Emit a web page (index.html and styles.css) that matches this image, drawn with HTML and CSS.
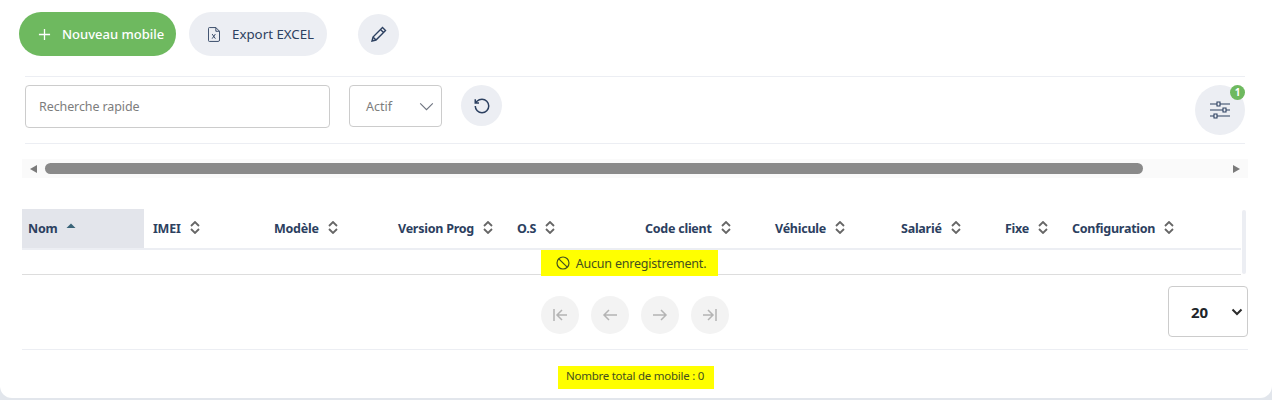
FILE: index.html
```html
<!DOCTYPE html>
<html lang="fr">
<head>
  <meta charset="UTF-8">
  <title>Mobiles</title>
  <link rel="stylesheet" href="styles.css">
</head>
<body>

<div class="card">

  <div class="actions">
    <button type="button" class="btn btn-green">
      <svg class="ico-plus" viewBox="0 0 14 14"><path d="M7 1v12M1 7h12"/></svg>
      Nouveau mobile
    </button>
    <button type="button" class="btn btn-grey">
      <svg class="ico-file" viewBox="0 0 13 16"><path d="M1.500 .5h7l4 4V14a1.500 1.500 0 0 1-1.500 1.500H1.500A1 1 0 0 1 .5 14.500v-13a1 1 0 0 1 1-1zM8.500 .5v4h4M4.500 7.500l3.500 5M8 7.500l-3.500 5"/></svg>
      Export EXCEL
    </button>
    <button type="button" class="round edit">
      <svg class="ico" viewBox="0 0 16 16"><path d="M11.500 1.500l3 3L5 14l-4 1 1-4zM9.500 3.500l3 3M2 11l3 3"/></svg>
    </button>
  </div>

  <div class="filters">
    <input class="search" type="text" placeholder="Recherche rapide">
    <div class="status">
      <span>Actif</span>
      <svg class="ico-chev" viewBox="0 0 16 10"><path d="M1 1.500l7 7 7-7"/></svg>
    </div>
    <button type="button" class="round">
      <svg class="ico-reset" viewBox="0 0 24 24"><path d="M3 12a9 9 0 1 0 9-9 9.750 9.750 0 0 0-6.740 2.740L3 8M3 3v5h5"/></svg>
    </button>
    <div class="filter-wrap">
      <button type="button" class="round big">
        <svg class="ico-sliders" viewBox="0 0 22 18"><path d="M1 3h7M11 3h10M1 9h13M17 9h4M1 15h4M8 15h13M8 1h3v4H8zM14 7h3v4h-3zM5 13h3v4H5z"/></svg>
      </button>
      <span class="badge">1</span>
    </div>
  </div>

  <div class="hscroll">
    <span class="arrow-left"></span>
    <span class="thumb"></span>
    <span class="arrow-right"></span>
  </div>

  <div class="table-wrap">
    <table class="grid">
      <thead>
        <tr>
          <th class="sorted">Nom <svg class="sort" viewBox="0 0 10 13"><path class="up" d="M5 2.500L9.500 7H.5z"/></svg></th>
          <th>IMEI <svg class="sort" viewBox="0 0 10 13"><path d="M1 5l4-4 4 4M1 8l4 4 4-4"/></svg></th>
          <th>Modèle <svg class="sort" viewBox="0 0 10 13"><path d="M1 5l4-4 4 4M1 8l4 4 4-4"/></svg></th>
          <th>Version Prog <svg class="sort" viewBox="0 0 10 13"><path d="M1 5l4-4 4 4M1 8l4 4 4-4"/></svg></th>
          <th>O.S <svg class="sort" viewBox="0 0 10 13"><path d="M1 5l4-4 4 4M1 8l4 4 4-4"/></svg></th>
          <th>Code client <svg class="sort" viewBox="0 0 10 13"><path d="M1 5l4-4 4 4M1 8l4 4 4-4"/></svg></th>
          <th>Véhicule <svg class="sort" viewBox="0 0 10 13"><path d="M1 5l4-4 4 4M1 8l4 4 4-4"/></svg></th>
          <th>Salarié <svg class="sort" viewBox="0 0 10 13"><path d="M1 5l4-4 4 4M1 8l4 4 4-4"/></svg></th>
          <th>Fixe <svg class="sort" viewBox="0 0 10 13"><path d="M1 5l4-4 4 4M1 8l4 4 4-4"/></svg></th>
          <th>Configuration <svg class="sort" viewBox="0 0 10 13"><path d="M1 5l4-4 4 4M1 8l4 4 4-4"/></svg></th>
        </tr>
      </thead>
      <tbody>
        <tr>
          <td colspan="10">
            <span class="empty">
              <svg class="ico-ban" viewBox="0 0 14 14"><circle cx="7" cy="7" r="6"/><path d="M2.800 2.800l8.400 8.400"/></svg>
              Aucun enregistrement.
            </span>
          </td>
        </tr>
      </tbody>
    </table>
    <span class="vscroll"></span>
  </div>

  <div class="pager">
    <div class="pages">
      <button type="button" class="page"><svg viewBox="0 0 16 16"><path d="M2 2v12M15 8H5M10 3L5 8l5 5"/></svg></button>
      <button type="button" class="page"><svg viewBox="0 0 16 16"><path d="M15 8H2M7 3L2 8l5 5"/></svg></button>
      <button type="button" class="page"><svg viewBox="0 0 16 16"><path d="M1 8h13M9 3l5 5-5 5"/></svg></button>
      <button type="button" class="page"><svg viewBox="0 0 16 16"><path d="M14 2v12M1 8h10M6 3l5 5-5 5"/></svg></button>
    </div>
    <div class="per-page">
      <span>20</span>
      <svg viewBox="0 0 12 8"><path d="M1.500 1.500L6 6l4.500-4.500"/></svg>
    </div>
  </div>

  <div class="total-row">
    <span class="total">Nombre total de mobile : 0</span>
  </div>

</div>

</body>
</html>
```

FILE: styles.css
```css
body {
  margin: 0;
  padding: 0;
  background-color: #e2e6ec;
  font-family: "Noto Sans", Arial, sans-serif;
  color: #2c4060;
}

button {
  font-family: inherit;
  border: none;
  padding: 0;
  cursor: pointer;
}

.card {
  height: 398px;
  box-sizing: border-box;
  padding: 12px 24px 0 22px;
  background-color: #fff;
  border-radius: 0 0 12px 12px;
  overflow: hidden;
}

/* Top buttons */
.actions {
  display: flex;
  align-items: center;
  margin-left: -3px;
  height: 44px;
}

.btn {
  display: flex;
  align-items: center;
  height: 44px;
  border-radius: 22px;
  font-size: 13px;
}

.btn-green {
  width: 157px;
  padding-left: 19px;
  gap: 11px;
  background-color: #6eb95f;
  color: #fff;
  font-weight: 500;
}

.btn-grey {
  width: 138px;
  margin-left: 13px;
  padding-left: 19px;
  gap: 12px;
  background-color: #eceef3;
  color: #2c4060;
  font-size: 13.300px;
}

.ico-plus {
  width: 13px;
  height: 13px;
  fill: none;
  stroke: #fff;
  stroke-width: 1.400;
}

.ico-file {
  width: 12px;
  height: 15px;
  fill: none;
  stroke: #2c4060;
  stroke-width: 1;
}

.round {
  width: 41px;
  height: 41px;
  display: flex;
  align-items: center;
  justify-content: center;
  border-radius: 50%;
  background-color: #eceef3;
  flex-shrink: 0;
}

.edit {
  margin-left: 31px;
}

.ico {
  width: 16px;
  height: 16px;
  fill: none;
  stroke: #2c4060;
  stroke-width: 1.400;
}

.ico-reset {
  width: 18px;
  height: 18px;
  fill: none;
  stroke: #2c4060;
  stroke-width: 2;
}

/* Filter bar */
.filters {
  display: flex;
  align-items: flex-start;
  margin: 20px 3px 0 3px;
  padding: 8px 0;
  height: 50px;
  border-top: 1px solid #eceef3;
  border-bottom: 1px solid #eceef3;
}

.search {
  width: 305px;
  height: 43px;
  box-sizing: border-box;
  padding: 0 13px;
  border: 1px solid #ccc;
  border-radius: 4px;
  font-family: inherit;
  font-size: 12.500px;
  letter-spacing: -0.1px;
}

.search::placeholder {
  color: #7d7d7d;
  opacity: 1;
}

.status {
  width: 93px;
  height: 42px;
  box-sizing: border-box;
  margin-left: 19px;
  padding: 0 7px 0 16px;
  display: flex;
  align-items: center;
  justify-content: space-between;
  border: 1px solid #ccc;
  border-radius: 4px;
  font-size: 12.500px;
  color: #7d7d7d;
}

.ico-chev {
  width: 15px;
  height: 9px;
  fill: none;
  stroke: #6f7480;
  stroke-width: 1.300;
}

.filters .round {
  margin-left: 19px;
}

.filter-wrap {
  position: relative;
  margin-left: auto;
}

.filters .big {
  width: 50px;
  height: 50px;
  margin: 0;
}

.ico-sliders {
  width: 22px;
  height: 18px;
  fill: none;
  stroke: #2c4060;
  stroke-width: 1.100;
}

.badge {
  position: absolute;
  top: 0;
  right: 0;
  width: 15px;
  height: 15px;
  border-radius: 50%;
  background-color: #6eb95f;
  color: #fff;
  font-size: 10px;
  font-weight: 700;
  line-height: 15px;
  text-align: center;
}

/* Horizontal scrollbar */
.hscroll {
  display: flex;
  align-items: center;
  height: 19px;
  margin-top: 15px;
  background-color: #fafafa;
}

.thumb {
  width: 1098px;
  height: 11px;
  margin-left: 8px;
  border-radius: 6px;
  background-color: #8a8a8a;
}

.arrow-left {
  margin-left: 8px;
  border-style: solid;
  border-width: 4.500px 7px 4.500px 0;
  border-color: transparent #7a7a7a transparent transparent;
}

.arrow-right {
  margin-left: auto;
  margin-right: 8px;
  border-style: solid;
  border-width: 4.500px 0 4.500px 7px;
  border-color: transparent transparent transparent #7a7a7a;
}

/* Table */
.table-wrap {
  position: relative;
  margin-top: 31px;
  height: 65px;
}

.vscroll {
  position: absolute;
  top: 1px;
  right: 2px;
  width: 4px;
  height: 64px;
  border-radius: 2px;
  background-color: #eceef3;
}

.grid {
  width: 1219px;
  table-layout: fixed;
  border-collapse: collapse;
  font-size: 12.500px;
}

.grid th {
  height: 40px;
  padding: 0 0 0 9px;
  box-sizing: border-box;
  border-bottom: 2px solid #eceef3;
  text-align: left;
  font-weight: 700;
  letter-spacing: -0.25px;
  white-space: nowrap;
  color: #2c4060;
}

.grid th:nth-child(1) { width: 122px; padding-left: 6px; }
.grid th:nth-child(2) { width: 121px; }
.grid th:nth-child(3) { width: 124px; }
.grid th:nth-child(4) { width: 119px; }
.grid th:nth-child(5) { width: 128px; }
.grid th:nth-child(6) { width: 130px; }
.grid th:nth-child(7) { width: 126px; }
.grid th:nth-child(8) { width: 104px; }
.grid th:nth-child(9) { width: 67px; }

.grid .sorted {
  background-color: #e3e5eb;
}

.sort {
  width: 10px;
  height: 13px;
  margin-left: 6px;
  vertical-align: -1px;
  fill: none;
  stroke: #666;
  stroke-width: 1.800;
}

.sort .up {
  fill: #3a6478;
  stroke: none;
}

.grid td {
  height: 23px;
  padding: 0 4px 0 0;
  border-bottom: 1px solid #ddd;
  text-align: center;
}

.empty {
  display: inline-flex;
  align-items: center;
  justify-content: center;
  gap: 6px;
  width: 177px;
  height: 26px;
  box-sizing: border-box;
  padding-left: 3px;
  margin-bottom: -2px;
  background-color: #ff0;
  font-size: 12.500px;
  letter-spacing: -0.2px;
  color: #44501f;
}

.ico-ban {
  width: 14px;
  height: 14px;
  fill: none;
  stroke: #44501f;
  stroke-width: 1.200;
}

/* Pagination */
.pager {
  position: relative;
  display: flex;
  justify-content: center;
  align-items: flex-start;
  height: 63px;
  margin-top: 12px;
  border-bottom: 1px solid #eceef3;
}

.pages {
  display: flex;
  gap: 12px;
  margin-top: 10px;
}

.page {
  width: 38px;
  height: 38px;
  display: flex;
  align-items: center;
  justify-content: center;
  border-radius: 50%;
  background-color: #f3f3f3;
}

.page svg {
  width: 16px;
  height: 16px;
  fill: none;
  stroke: #b4b4b4;
  stroke-width: 1.500;
}

.per-page {
  position: absolute;
  top: 0;
  right: 0;
  width: 80px;
  height: 51px;
  box-sizing: border-box;
  display: flex;
  align-items: center;
  padding: 0 4px 0 22px;
  justify-content: space-between;
  border: 1px solid #ccc;
  border-radius: 4px;
  font-size: 15px;
  font-weight: 700;
  color: #212529;
}

.per-page svg {
  width: 12px;
  height: 8px;
  fill: none;
  stroke: #2b2b2b;
  stroke-width: 2;
}

/* Total */
.total-row {
  display: flex;
  justify-content: center;
  margin-top: 16px;
}

.total {
  width: 156px;
  height: 23px;
  box-sizing: border-box;
  padding-right: 2px;
  margin-left: 2px;
  background-color: #ff0;
  font-size: 11.500px;
  letter-spacing: -0.25px;
  line-height: 19px;
  text-align: center;
  color: #44501f;
}
```
